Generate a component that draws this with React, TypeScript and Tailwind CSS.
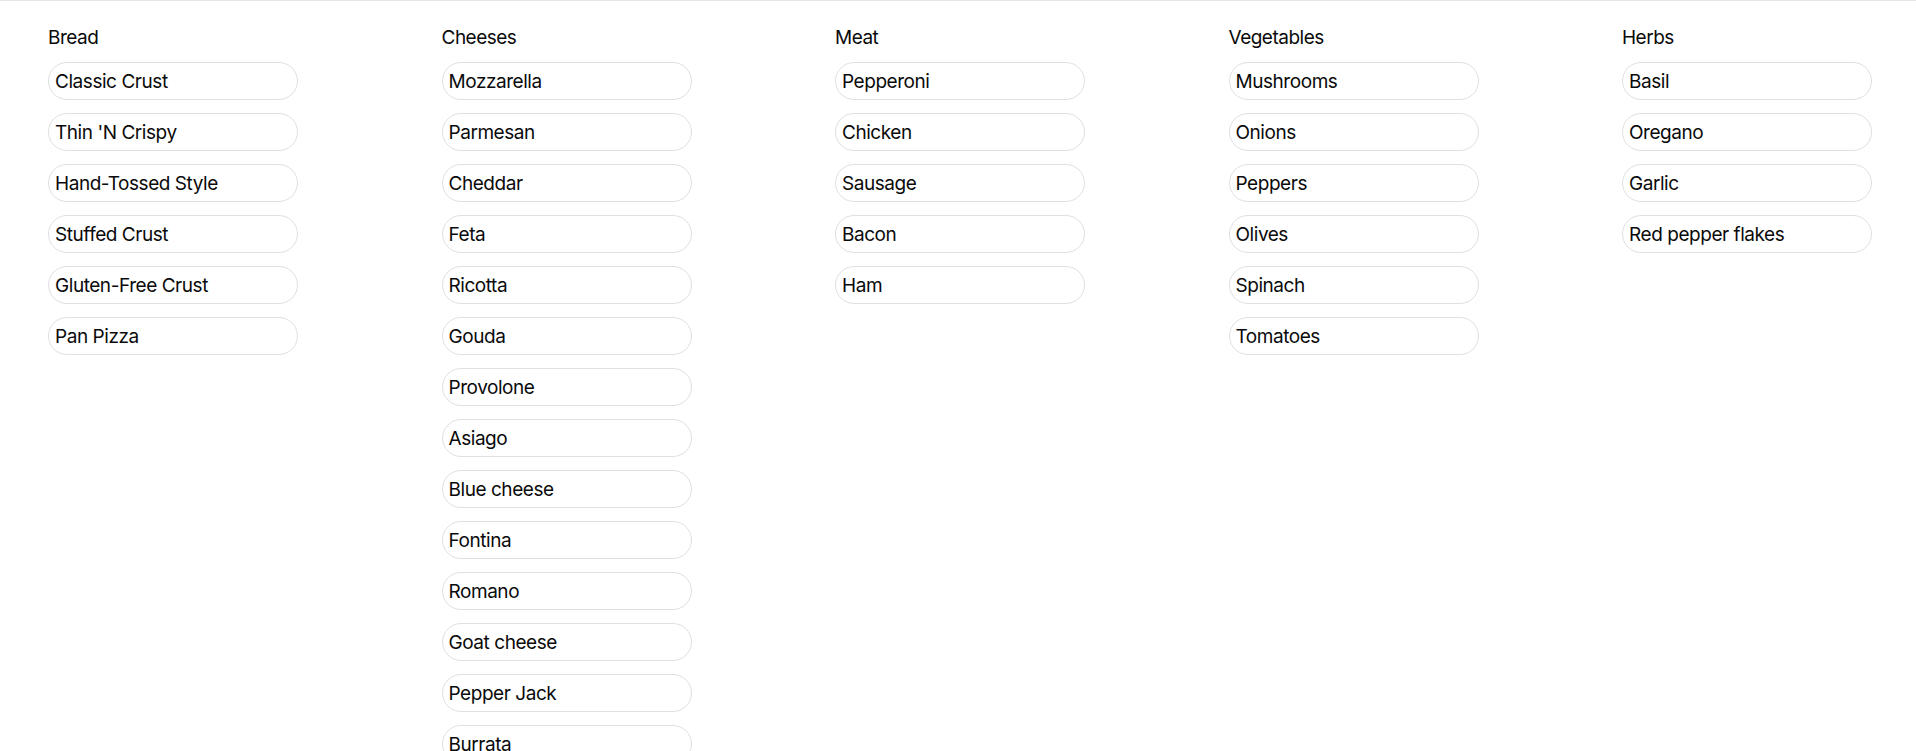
import React from "react";

const groups: { title: string; items: string[] }[] = [
  {
    title: "Bread",
    items: ["Classic Crust", "Thin 'N Crispy", "Hand-Tossed Style", "Stuffed Crust", "Gluten-Free Crust", "Pan Pizza"],
  },
  {
    title: "Cheeses",
    items: [
      "Mozzarella",
      "Parmesan",
      "Cheddar",
      "Feta",
      "Ricotta",
      "Gouda",
      "Provolone",
      "Asiago",
      "Blue cheese",
      "Fontina",
      "Romano",
      "Goat cheese",
      "Pepper Jack",
      "Burrata",
    ],
  },
  { title: "Meat", items: ["Pepperoni", "Chicken", "Sausage", "Bacon", "Ham"] },
  { title: "Vegetables", items: ["Mushrooms", "Onions", "Peppers", "Olives", "Spinach", "Tomatoes"] },
  { title: "Herbs", items: ["Basil", "Oregano", "Garlic", "Red pepper flakes"] },
];

export default function App() {
  return (
    <div
      className="min-h-screen bg-white border-t border-[#e5e5e5] text-[#0a0a0a]"
      style={{ fontFamily: "Inter, 'Noto Sans', sans-serif" }}
    >
      <div className="flex items-start gap-[143.5px] pl-12 pt-[25px]">
        {groups.map((g) => (
          <div key={g.title} className="flex w-[250px] shrink-0 flex-col">
            <h2 className="mb-[12px] h-6 text-[19px] leading-6 font-normal tracking-[-0.5px]">{g.title}</h2>
            <div className="flex flex-col gap-[13px]">
              {g.items.map((it) => (
                <div
                  key={it}
                  className="flex h-[38px] w-[250px] items-center rounded-full border border-[#e0e0e0] pl-[6px] pt-[2px] text-[19px] leading-6 tracking-[-0.45px]"
                >
                  {it}
                </div>
              ))}
            </div>
          </div>
        ))}
      </div>
    </div>
  );
}
